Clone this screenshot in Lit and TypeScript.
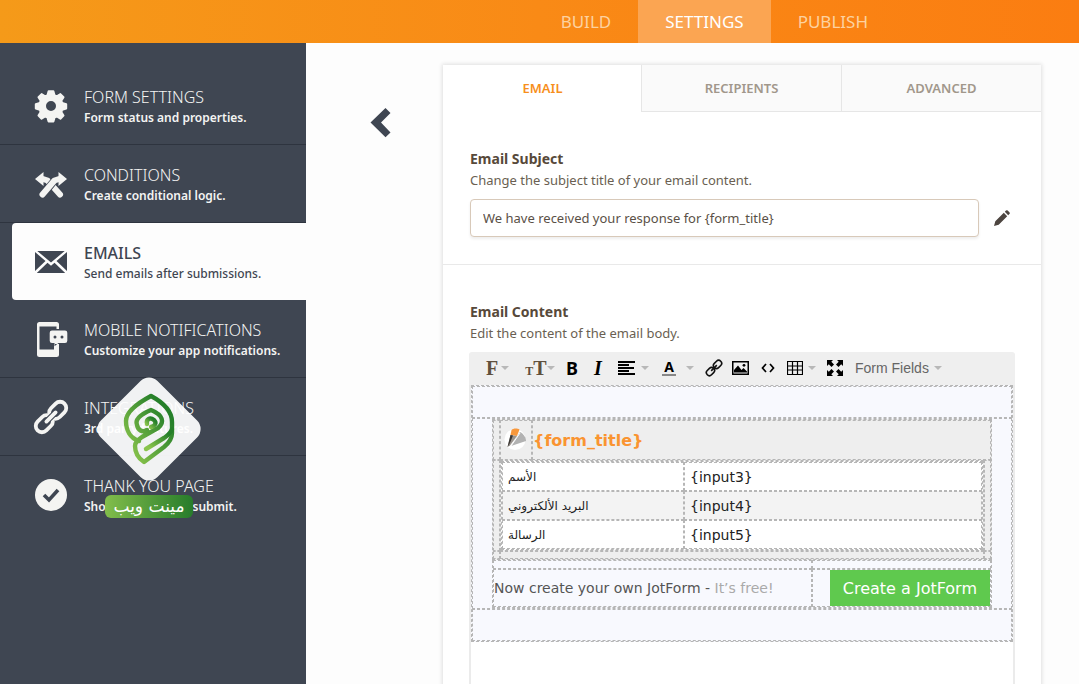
import { LitElement, html, css, svg } from "lit";
import { customElement, state } from "lit/decorators.js";
import { classMap } from "lit/directives/class-map.js";

const icons: Record<string, unknown> = {
  gear: svg`<path fill="currentColor" fill-rule="evenodd" stroke="currentColor" stroke-width="2" stroke-linejoin="round" d="M13.600 1.200h4.800l1.200 4.200 2.200.9 3.600-2.200 3.100 3.100-2.200 3.600.9 2.200 4 1.200v4.400l-4 1.200-.9 2.200 2.200 3.600-3.100 3.100-3.600-2.200-2.200.9-1.200 4.200h-4.800l-1.200-4.200-2.200-.9-3.600 2.200-3.100-3.100 2.200-3.600-.9-2.200-4-1.200v-4.400l4-1.200.9-2.200-2.200-3.600 3.100-3.100 3.600 2.200 2.200-.9zM16 10a6 6 0 1 0 0 12a6 6 0 1 0 0-12z"/>`,
  conditions: svg`<g transform="translate(0 1.500)"><path d="M8 9.500 12.500 11 25 25" fill="none" stroke="currentColor" stroke-width="6" stroke-linecap="round" stroke-linejoin="round"/><path d="M24 9.500 19.500 11 10 22.500" fill="none" stroke="#3f4652" stroke-width="7.500" stroke-linejoin="round"/><path d="M24 9.500 19.500 11 7.500 25" fill="none" stroke="currentColor" stroke-width="6" stroke-linecap="round" stroke-linejoin="round"/><path fill="currentColor" d="M8.500 2.500v14L0 9.500zM23.500 2.500v14L32 9.500z"/></g>`,
  mail: svg`<path fill="currentColor" d="M2.300 5h27.400L16 16.500zM0 6l10.500 9L0 25zM32 6v19l-10.500-10zM1.800 27l10.700-10.300 3.500 3 3.500-3L30.200 27z"/>`,
  mobile: svg`<path fill="currentColor" fill-rule="evenodd" d="M4.500-1h17a2.500 2.500 0 0 1 2.500 2.500V6h-2.500V3.500h-17V26.500H19V21h5v10.500a2.500 2.500 0 0 1-2.500 2.500h-17A2.500 2.500 0 0 1 2 31.500v-30A2.500 2.500 0 0 1 4.500-1zM17 7.500h13a2.300 2.300 0 0 1 2.300 2.300v8a2.300 2.300 0 0 1-2.300 2.300h-6.500l-4 3.200V20H17a2.300 2.300 0 0 1-2.300-2.300v-8A2.300 2.300 0 0 1 17 7.500zM20 12.500a1.500 1.500 0 1 0 0 3a1.500 1.500 0 1 0 0-3zM27 12.500a1.500 1.500 0 1 0 0 3a1.500 1.500 0 1 0 0-3z"/>`,
  chain: svg`<g fill="none" stroke="currentColor" stroke-width="3.800" transform="rotate(-45 16 16)"><rect x="-3" y="9.800" width="19" height="12.400" rx="6.200"/><rect x="16" y="9.800" width="19" height="12.400" rx="6.200"/><path d="M10 16h12" stroke-linecap="round" stroke="#3f4652" stroke-width="6"/><path d="M9.500 16h13" stroke-linecap="round"/></g>`,
  check: svg`<circle cx="16" cy="16" r="16" fill="currentColor"/><path d="M9 16l5 5 9-10" fill="none" stroke="#3f4652" stroke-width="3.600"/>`,
};

const menu = [
  { icon: "gear", title: "FORM SETTINGS", note: "Form status and properties." },
  { icon: "conditions", title: "CONDITIONS", note: "Create conditional logic." },
  { icon: "mail", title: "EMAILS", note: "Send emails after submissions." },
  { icon: "mobile", title: "MOBILE NOTIFICATIONS", note: "Customize your app notifications." },
  { icon: "chain", title: "INTEGRATIONS", note: "3rd party features." },
  { icon: "check", title: "THANK YOU PAGE", note: "Show a page after submit." },
];

@customElement("app-header")
export class AppHeader extends LitElement {
  static styles = css`
    :host { display: block; background: linear-gradient(90deg, #f59a19, #f98a16 50%, #fb7d11); }
    .nav { display: flex; justify-content: flex-end; height: 43px; padding-right: 184px; }
    .link {
      display: flex; align-items: center; padding: 0 27px; color: #fdd2a0; text-decoration: none;
      font: 17px "Noto Sans", sans-serif;
    }
    .link.current { background: #fba552; color: #fff; }
  `;
  render() {
    return html`<nav class="nav" aria-label="Form">
      <a class="link" href="#build">BUILD</a>
      <a class="link current" href="#settings" aria-current="page">SETTINGS</a>
      <a class="link" href="#publish">PUBLISH</a>
    </nav>`;
  }
}

@customElement("brand-mark")
export class BrandMark extends LitElement {
  static styles = css`
    :host { display: flex; flex-direction: column; align-items: center; width: 106px; pointer-events: none; }
    .logo { display: block; width: 106px; height: 106px; }
    .name {
      margin-top: 13px; padding: 0 8px; border-radius: 6px; color: #fff; white-space: nowrap;
      background: linear-gradient(90deg, #82bd4b, #277c2b);
      font: 17px/23px "DejaVu Sans", sans-serif;
    }
  `;
  render() {
    return html`<svg class="logo" viewBox="0 0 106 106" aria-hidden="true">
        <defs><linearGradient id="leaf" x1="0" y1="1" x2="1" y2="0"><stop offset="0.100" stop-color="#8ac44c"/><stop offset="0.800" stop-color="#26802a"/></linearGradient></defs>
        <rect x="13" y="13" width="80" height="80" rx="12" fill="#fff" fill-opacity="0.930" transform="rotate(45 53 53)"/>
        <g fill="none" stroke="url(#leaf)" stroke-width="4.400" stroke-linejoin="round" stroke-linecap="round">
          <path d="M43 65C34 62 30 54 30 45C30 36 40 28 55 20C70 28 76 36 76 46V57C76 63 73 67 68 71L48 86C42 82 39 76 39 70C39 66 42 64 46 61L62 52C69 46 67 39 55 34C43 39 39 44 41 49C42 54 46 57 51 54"/>
          <path d="M76 53C75 57 72 59 68 62L50 73"/>
          <path d="M51 48C50 43 54 41 58 44C61 47 59 50 55 51"/>
        </g>
      </svg>
      <span class="name" lang="ar" dir="rtl">مينت ويب</span>`;
  }
}

@customElement("settings-menu")
export class SettingsMenu extends LitElement {
  static styles = css`
    :host { display: block; position: relative; background: #3f4652; padding-top: 24px; }
    .item {
      display: grid; grid-template-columns: 32px 1fr; column-gap: 17px; align-items: center; box-sizing: border-box;
      height: 78px; padding: 0 20px 0 35px; border-bottom: 1px solid #2e343f; color: #f4f4f2; text-decoration: none;
    }
    .item:last-of-type { border-bottom-color: transparent; }
    .item.current {
      height: 77px; margin-left: 12px; padding-left: 23px; border: 0; border-radius: 4px 0 0 4px;
      background: #fdfdfd; color: #3f4652;
    }
    .icon { width: 32px; height: 32px; overflow: visible; }
    .words { display: block; padding-top: 2px; white-space: nowrap; }
    .title { display: block; font: 300 16px/22px "Noto Sans", sans-serif; }
    .note { display: block; font: 600 12px/20px "Noto Sans", sans-serif; }
    .current .title { font-weight: 500; }
    .current .note { font-weight: 500; }
    .brand { position: absolute; left: 96px; top: 333px; }
  `;
  render() {
    return html`<nav aria-label="Settings">
        ${menu.map(
          (m) => html`<a class=${classMap({ item: true, current: m.icon === "mail" })} href="#${m.icon}">
            <svg class="icon" viewBox="0 0 32 32" aria-hidden="true">${icons[m.icon]}</svg>
            <span class="words"><span class="title">${m.title}</span><span class="note">${m.note}</span></span>
          </a>`
        )}
      </nav>
      <brand-mark class="brand"></brand-mark>`;
  }
}

@customElement("editor-toolbar")
export class EditorToolbar extends LitElement {
  static styles = css`
    :host {
      display: flex; align-items: center; box-sizing: border-box; height: 33px; padding: 0 0 2px 15px;
      background: #efefef; border-radius: 3px 3px 0 0;
    }
    .tool {
      display: flex; align-items: center; justify-content: center; gap: 3px; width: 26px; height: 26px;
      padding: 0; border: 0; background: none; color: #000;
    }
    .face { width: 27px; margin-right: 14px; }
    .size { width: 30px; margin-right: 4px; gap: 0; }
    .align { width: 40px; gap: 6px; margin-left: 2px; }
    .colour { width: 40px; gap: 10px; margin: 0 3px 0 5px; }
    .code { margin-left: 2px; }
    .grid { width: 40px; gap: 5px; }
    .full { margin-left: 1px; }
    .fields { width: auto; gap: 5px; margin-left: 7px; color: #666; font: 14px "Liberation Sans", sans-serif; }
    .serif { color: #5f503d; font: 700 20px/20px "Liberation Serif", serif; }
    .small { color: #5f503d; font: 700 12px/12px "Liberation Serif", serif; }
    .pair { display: flex; align-items: baseline; }
    .bold { font: 700 18px/20px "Noto Sans", sans-serif; }
    .italic { font: italic 700 20px/20px "Liberation Serif", serif; }
    .ink { border-bottom: 2px solid #888; padding: 0 2px; font: 700 14px/15px "Noto Sans", sans-serif; }
    .arrow { border: 4px solid transparent; border-top-color: #b8b8b8; border-bottom: 0; }
  `;
  render() {
    const arrow = html`<span class="arrow"></span>`;
    return html`
      <button class="tool face" aria-label="Font"><span class="serif">F</span>${arrow}</button>
      <button class="tool size" aria-label="Font size"><span class="pair"><span class="small">T</span><span class="serif">T</span></span>${arrow}</button>
      <button class="tool" aria-label="Bold"><span class="bold">B</span></button>
      <button class="tool" aria-label="Italic"><span class="italic">I</span></button>
      <button class="tool align" aria-label="Align">
        <svg width="17" height="14" viewBox="0 0 17 14"><path d="M0 1h17M0 4h11M0 7h16M0 10h11M0 13h17" stroke="#000" stroke-width="2"/></svg>${arrow}
      </button>
      <button class="tool colour" aria-label="Text colour"><span class="ink">A</span>${arrow}</button>
      <button class="tool" aria-label="Link">
        <svg width="18" height="18" viewBox="0 0 18 18"><g transform="rotate(-45 9 9)" fill="none" stroke="#111" stroke-width="1.600"><rect x="-.5" y="6" width="9" height="6" rx="3"/><rect x="9.500" y="6" width="9" height="6" rx="3"/><path d="M5 9h8"/></g></svg>
      </button>
      <button class="tool" aria-label="Image">
        <svg width="17" height="14" viewBox="0 0 17 14"><rect x=".75" y=".75" width="15.500" height="12.500" fill="none" stroke="#000" stroke-width="1.500"/><path d="M2 11.500V9l4-4.500L9.500 9l2-2L15 10.500v1z"/><circle cx="12" cy="4.300" r="1.400"/></svg>
      </button>
      <button class="tool code" aria-label="Source">
        <svg width="14" height="10" viewBox="0 0 14 10"><path d="M5 1 1.500 5 5 9M9 1l3.500 4L9 9" fill="none" stroke="#000" stroke-width="1.700"/></svg>
      </button>
      <button class="tool grid" aria-label="Table">
        <svg width="16" height="14" viewBox="0 0 16 14"><path d="M.5.5h15v13H.5zM.5 5h15M.5 9h15M5.500.5v13M10.500.5v13" fill="none" stroke="#000" stroke-width="1.200"/></svg>${arrow}
      </button>
      <button class="tool full" aria-label="Full screen">
        <svg width="16" height="16" viewBox="0 0 16 16"><path d="M0 0h6L4.300 1.800 7 4.500 4.500 7 1.800 4.300 0 6zM16 0v6l-1.800-1.700L11.500 7 9 4.500l2.700-2.700L10 0zM0 16v-6l1.800 1.700L4.500 9 7 11.500l-2.700 2.700L6 16zM16 16h-6l1.700-1.800L9 11.500 11.500 9l2.700 2.700L16 10z"/></svg>
      </button>
      <button class="tool fields">Form Fields${arrow}</button>
    `;
  }
}

@customElement("email-preview")
export class EmailPreview extends LitElement {
  static styles = css`
    :host {
      display: block; box-sizing: border-box; min-height: 400px; border: 2px solid #ebebeb; border-top: 0; background: #fff;
      color: #222; font: 14px "DejaVu Sans", sans-serif;
    }
    .box, .mail, .frame, .data, .data td, .data th { box-sizing: border-box; border: 1px dashed #b6b6b6; }
    .mail { background: #f8f9fe; }
    .space { height: 32px; }
    .frame { width: 500px; max-width: 100%; margin: 0 auto; }
    .form { background: #eeeeee; }
    .head { display: grid; grid-template-columns: 7px 32px 1fr; height: 40px; }
    .cell { display: flex; align-items: center; }
    .badge { width: 26px; height: 26px; }
    .title { color: #fa9431; font: 700 16px "DejaVu Sans", sans-serif; }
    .body { display: grid; grid-template-columns: 7px 1fr 7px; }
    .foot { display: grid; grid-template-columns: 7px 1fr 7px; height: 8px; }
    .data { width: 100%; border-spacing: 0; background: #fff; }
    .data th, .data td { height: 29px; padding: 0 5px; text-align: left; font-weight: 400; line-height: 20px; }
    .data th { width: 182px; font-size: 12px; }
    .data tr:nth-child(even) { background: #f3f3f3; }
    .promo { display: grid; grid-template-columns: 319px 1fr; grid-template-rows: 9px 38px; border-top: 0; }
    .words { color: #555; white-space: nowrap; }
    .free { color: #aaa; }
    .action { justify-content: flex-end; }
    .create {
      height: 36px; padding: 0 13px; border: 0; background: #5fc94e; color: #fff; white-space: nowrap;
      font: 16px "DejaVu Sans", sans-serif;
    }
  `;
  render() {
    const rows = [
      ["الأسم", "{input3}"],
      ["البريد الألكتروني", "{input4}"],
      ["الرسالة", "{input5}"],
    ];
    return html`<div class="mail">
      <div class="box space"></div>
      <div class="box">
        <div class="frame form">
          <div class="head">
            <div class="box"></div>
            <div class="box cell">
              <svg class="badge" viewBox="0 0 26 26" aria-hidden="true">
                <circle cx="14" cy="12.500" r="10.500" fill="#fff"/>
                <path d="M19 5c4 2 6 6 6 9l-15 5z" fill="#b2b2b2"/>
                <path d="M19 6 10 19" stroke="#fff" stroke-width="1"/>
                <path d="M10.500 3c1.500-2 6-2 8-.5L16 9l-6.500-1z" fill="#f8983c"/>
                <path d="M9.500 8 16 9 9 18.500 6.500 20z" fill="#9a948e"/>
                <path d="M9.500 8l2.500.4L8.500 17l-2 3z" fill="#3c3835"/>
              </svg>
            </div>
            <div class="box cell title">{form_title}</div>
          </div>
          <div class="body">
            <div class="box"></div>
            <div class="box">
              <table class="data" aria-label="Form answers">
                <tbody>
                  ${rows.map((r) => html`<tr><th scope="row" lang="ar">${r[0]}</th><td>${r[1]}</td></tr>`)}
                </tbody>
              </table>
            </div>
            <div class="box"></div>
          </div>
          <div class="foot"><div class="box"></div><div class="box"></div><div class="box"></div></div>
        </div>
        <div class="frame promo">
          <div class="box"></div><div class="box"></div>
          <div class="box cell words">Now create your own JotForm -&nbsp;<span class="free">It’s free!</span></div>
          <div class="box cell action"><button class="create">Create a JotForm</button></div>
        </div>
      </div>
      <div class="box space"></div>
    </div>`;
  }
}

@customElement("app-root")
export class AppRoot extends LitElement {
  @state() private tab = "EMAIL";

  static styles = css`
    :host { display: flex; flex-direction: column; height: 100vh; overflow: hidden; background: #fdfdfd; }
    .page { display: grid; grid-template-columns: 306px minmax(0, 1fr); flex: 1; min-height: 0; }
    .main { display: grid; grid-template-columns: 137px minmax(0, 1fr) 38px; align-items: start; padding-top: 22px; }
    .back { justify-self: start; margin: 42px 0 0 64px; padding: 0; border: 0; background: none; line-height: 0; }
    .card { background: #fff; box-shadow: 0 0 4px 1px #e0e0e0; color: #57493a; }
    .tabs { display: grid; grid-template-columns: 198px 1fr 1fr; }
    .tab {
      height: 47px; padding: 0; border: 0 solid #e6e6e6; border-width: 0 0 1px 1px; background: #fafafa; color: #a1978b;
      font: 600 13px "Noto Sans", sans-serif;
    }
    .tab.current { border-color: transparent; background: #fff; color: #f78f1c; }
    .section { padding: 36px 26px 27px 27px; border-bottom: 1px solid #e9e9e9; }
    .label { display: block; font: 700 14px/22px "Noto Sans", sans-serif; }
    .hint { margin: 0; font: 13px/21px "Noto Sans", sans-serif; color: #6a5f52; }
    .row { display: grid; grid-template-columns: 1fr 16px; column-gap: 15px; align-items: center; margin: 8px 5px 0 0; }
    .subject {
      box-sizing: border-box; min-width: 0; height: 38px; padding: 0 12px; border: 1px solid #d8c9b9; border-radius: 4px;
      background: #fff; box-shadow: 0 2px 3px #eee; color: #5a5046; font: 13px "Noto Sans", sans-serif;
    }
    .edit { padding: 0; border: 0; background: none; line-height: 0; }
    .editor { margin: 8px 0 0 -1px; }
  `;
  render() {
    return html`
      <app-header></app-header>
      <div class="page">
        <settings-menu></settings-menu>
        <main class="main">
          <button class="back" aria-label="Back">
            <svg width="22" height="32" viewBox="0 0 22 32"><path d="M.5 15.500 15.500 1l5 5-9.500 9.500 9.500 10-5 4.800z" fill="#3f4652"/></svg>
          </button>
          <section class="card">
            <div class="tabs" role="tablist">
              ${["EMAIL", "RECIPIENTS", "ADVANCED"].map(
                (t) => html`<button role="tab" aria-selected=${t === this.tab ? "true" : "false"}
                  class=${classMap({ tab: true, current: t === this.tab })} @click=${() => (this.tab = t)}>${t}</button>`
              )}
            </div>
            <div class="section">
              <label class="label" for="subject">Email Subject</label>
              <p class="hint">Change the subject title of your email content.</p>
              <div class="row">
                <input class="subject" id="subject" type="text" .value=${"We have received your response for {form_title}"} />
                <button class="edit" aria-label="Edit subject">
                  <svg width="16" height="16" viewBox="0 0 16 16"><path d="M0 16l1.300-4.700L9.800 2.800l3.400 3.400-8.500 8.500zM10.800 1.800 12 .6a1.200 1.200 0 0 1 1.700 0l1.700 1.700a1.200 1.200 0 0 1 0 1.700l-1.200 1.200z" fill="#4d4540"/></svg>
                </button>
              </div>
            </div>
            <div class="section">
              <span class="label">Email Content</span>
              <p class="hint">Edit the content of the email body.</p>
              <div class="editor">
                <editor-toolbar></editor-toolbar>
                <email-preview></email-preview>
              </div>
            </div>
          </section>
        </main>
      </div>
    `;
  }
}
